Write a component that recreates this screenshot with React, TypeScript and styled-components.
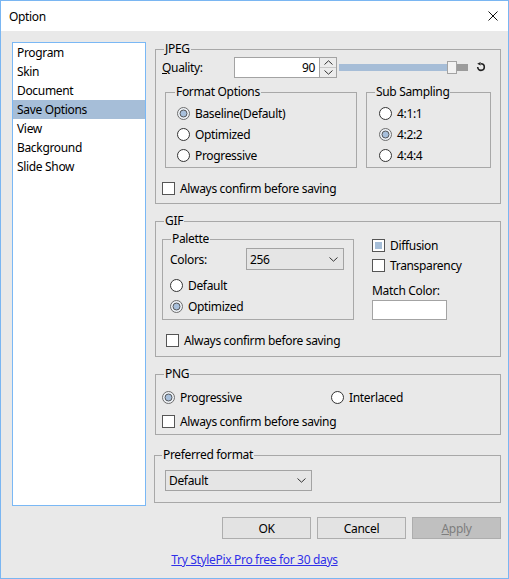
import { createGlobalStyle, styled } from 'styled-components';

const GlobalStyle = createGlobalStyle`
  html, body {
    margin: 0;
    padding: 0;
    background: #ffffff;
  }
  body {
    font-family: 'Segoe UI', 'Noto Sans', sans-serif;
    font-size: 12px;
    letter-spacing: -0.33px;
    color: #000;
  }
  * {
    box-sizing: border-box;
  }
`;

const Window = styled.div`
  width: 509px;
  height: 579px;
  border: 1px solid #7ab6f2;
  background: #e9e9e9;
  display: flex;
  flex-direction: column;
`;

const TitleBar = styled.div`
  height: 30px;
  flex-shrink: 0;
  background: #fff;
  display: flex;
  align-items: center;
  justify-content: space-between;
  padding: 0 10px 0 8px;
`;

const Title = styled.span`
  font-size: 12px;
`;

const Body = styled.div`
  display: flex;
  gap: 9px;
  padding: 11px 0 0 11px;
`;

const NavList = styled.ul`
  list-style: none;
  margin: 0;
  padding: 0;
  width: 134px;
  height: 464px;
  background: #fff;
  border: 1px solid #7ab8f5;
`;

const NavItem = styled.li<{ $active?: boolean }>`
  height: 19px;
  line-height: 19px;
  padding-left: 4px;
  background: ${p => (p.$active ? '#a6bed8' : 'transparent')};
`;

const RightCol = styled.div`
  width: 346px;
  display: flex;
  flex-direction: column;
`;

const Group = styled.fieldset<{ $w?: number; $gap?: number; $shift?: number }>`
  margin: ${p => p.$gap ?? 0}px 0 0 ${p => p.$shift ?? 0}px;
  padding: 0;
  min-width: 0;
  width: ${p => (p.$w ? `${p.$w}px` : 'auto')};
  border: 1px solid #a8a8a8;
`;

const Legend = styled.legend<{ $x: number }>`
  margin-left: ${p => p.$x}px;
  padding: 0 1px;
  height: 14px;
  line-height: 14px;
  font-size: 12px;
`;

const GroupBody = styled.div<{ $pad: string }>`
  display: flex;
  flex-direction: column;
  padding: ${p => p.$pad};
`;

const Row = styled.div<{ $h?: number; $mt?: number; $pl?: number; $gap?: number }>`
  display: flex;
  align-items: center;
  height: ${p => (p.$h ? `${p.$h}px` : 'auto')};
  margin-top: ${p => p.$mt ?? 0}px;
  padding-left: ${p => p.$pl ?? 0}px;
  gap: ${p => p.$gap ?? 0}px;
`;

const TopRow = styled.div<{ $mt?: number; $pl?: number; $gap?: number }>`
  display: flex;
  align-items: flex-start;
  margin-top: ${p => p.$mt ?? 0}px;
  padding-left: ${p => p.$pl ?? 0}px;
  gap: ${p => p.$gap ?? 0}px;
`;

const StretchRow = styled(TopRow)`
  align-items: stretch;
`;

const Label = styled.span<{ $w?: number }>`
  width: ${p => (p.$w ? `${p.$w}px` : 'auto')};
  flex-shrink: 0;
  white-space: nowrap;
`;

const TextBox = styled.div<{ $w: number; $h: number }>`
  width: ${p => p.$w}px;
  height: ${p => p.$h}px;
  background: #fff;
  border: 1px solid #a3a3a3;
  display: flex;
  align-items: center;
  justify-content: flex-end;
  padding-right: 4px;
`;

const Spin = styled.div`
  width: 17px;
  height: 21px;
  border: 1px solid #a3a3a3;
  border-left: none;
  display: flex;
  flex-direction: column;
`;

const SpinHalf = styled.div<{ $top?: boolean }>`
  flex: 1;
  display: flex;
  align-items: center;
  justify-content: center;
  background: #ececec;
  border-bottom: ${p => (p.$top ? '1px solid #c8c8c8' : 'none')};
`;

const Slider = styled.div`
  display: flex;
  align-items: center;
  margin-left: 2px;
`;

const SliderFill = styled.div`
  width: 108px;
  height: 7px;
  background: #a6bdd7;
`;

const SliderThumb = styled.div`
  width: 10px;
  height: 13px;
  background: #f2f2f2;
  border: 1px solid #a3a3a3;
`;

const SliderRest = styled.div`
  width: 11px;
  height: 7px;
  background: #9b9b9b;
`;

const ResetIcon = styled.svg`
  margin-left: 8px;
`;

const Combo = styled.div<{ $w: number; $h: number }>`
  width: ${p => p.$w}px;
  height: ${p => p.$h}px;
  background: #e5e5e5;
  border: 1px solid #a3a3a3;
  display: flex;
  align-items: center;
  justify-content: space-between;
  padding: 0 5px 0 3px;
`;

const Option = styled.label<{ $w?: number; $h?: number }>`
  display: flex;
  align-items: center;
  gap: 5px;
  height: ${p => p.$h ?? 21}px;
  width: ${p => (p.$w ? `${p.$w}px` : 'auto')};
  white-space: nowrap;
`;

const Box = styled.span<{ $checked?: boolean }>`
  width: 13px;
  height: 13px;
  flex-shrink: 0;
  background: #fff;
  border: 1px solid #555;
  padding: 2px;
  display: flex;

  &::after {
    content: '';
    flex: 1;
    background: ${p => (p.$checked ? '#a6bed8' : 'transparent')};
  }
`;

const Column = styled.div<{ $mt?: number }>`
  display: flex;
  flex-direction: column;
  margin-top: ${p => p.$mt ?? 0}px;
`;

const Footer = styled.div`
  display: flex;
  justify-content: flex-end;
  gap: 6px;
  padding-right: 7px;
  margin-top: 11px;
`;

const Button = styled.button<{ $disabled?: boolean }>`
  width: 89px;
  height: 22px;
  font-family: inherit;
  font-size: 12px;
  letter-spacing: inherit;
  color: ${p => (p.$disabled ? '#7d7d7d' : '#000')};
  background: ${p => (p.$disabled ? '#c0c0c0' : '#e3e3e3')};
  border: 1px solid #adadad;
  padding: 0;
`;

const LinkRow = styled.div`
  display: flex;
  justify-content: center;
  margin-top: 13px;
`;

const Link = styled.a`
  color: #3030e8;
  text-decoration: underline;
  line-height: 16px;
`;

function Radio({ checked }: { checked?: boolean }) {
  return (
    <svg width="13" height="13" viewBox="0 0 13 13" style={{ flexShrink: 0 }}>
      <circle cx="6.5" cy="6.5" r="6" fill={checked ? '#eef2f7' : '#fff'} stroke={checked ? '#6d6d6d' : '#333'} />
      {checked && <circle cx="6.5" cy="6.5" r="3.5" fill="#a8c0dc" stroke="#4a4a4a" strokeWidth="0.9" />}
    </svg>
  );
}

function Chevron({ up }: { up?: boolean }) {
  return (
    <svg width="9" height="5" viewBox="0 0 9 5">
      <polyline
        points={up ? '0.5,4.5 4.5,0.8 8.5,4.5' : '0.5,0.5 4.5,4.2 8.5,0.5'}
        fill="none"
        stroke="#333"
        strokeWidth="1"
      />
    </svg>
  );
}

function Check({ label, checked }: { label: string; checked?: boolean }) {
  return (
    <Option $h={20}>
      <Box $checked={checked} />
      {label}
    </Option>
  );
}

export default function App() {
  return (
    <>
      <GlobalStyle />
      <Window>
        <TitleBar>
          <Title>Option</Title>
          <svg width="10" height="10" viewBox="0 0 10 10">
            <path d="M0.5 0.5 L9.5 9.5 M9.5 0.5 L0.5 9.5" stroke="#111" strokeWidth="1" />
          </svg>
        </TitleBar>
        <Body>
          <NavList>
            <NavItem>Program</NavItem>
            <NavItem>Skin</NavItem>
            <NavItem>Document</NavItem>
            <NavItem $active>Save Options</NavItem>
            <NavItem>View</NavItem>
            <NavItem>Background</NavItem>
            <NavItem>Slide Show</NavItem>
          </NavList>
          <RightCol>
            <Group>
              <Legend $x={8}>JPEG</Legend>
              <GroupBody $pad="0 0 5px 0">
                <Row $h={22} $pl={6}>
                  <Label $w={72}>
                    <u>Q</u>uality:
                  </Label>
                  <TextBox $w={86} $h={21}>90</TextBox>
                  <Spin>
                    <SpinHalf $top>
                      <Chevron up />
                    </SpinHalf>
                    <SpinHalf>
                      <Chevron />
                    </SpinHalf>
                  </Spin>
                  <Slider>
                    <SliderFill />
                    <SliderThumb />
                    <SliderRest />
                  </Slider>
                  <ResetIcon width="10" height="10" viewBox="0 0 10 10">
                    <path d="M5 1.8 A3.3 3.3 0 1 1 1.7 5.1" fill="none" stroke="#222" strokeWidth="1.6" />
                    <polygon points="1.2,1.8 4.6,0 4.6,3.6" fill="#222" />
                  </ResetIcon>
                </Row>
                <StretchRow $mt={7} $pl={9} $gap={9}>
                  <Group $w={192}>
                    <Legend $x={9}>Format Options</Legend>
                    <GroupBody $pad="4px 0 1px 11px">
                      <Option>
                        <Radio checked />
                        Baseline(Default)
                      </Option>
                      <Option>
                        <Radio />
                        Optimized
                      </Option>
                      <Option>
                        <Radio />
                        Progressive
                      </Option>
                    </GroupBody>
                  </Group>
                  <Group $w={125}>
                    <Legend $x={8}>Sub Sampling</Legend>
                    <GroupBody $pad="4px 0 1px 12px">
                      <Option>
                        <Radio />
                        4:1:1
                      </Option>
                      <Option>
                        <Radio checked />
                        4:2:2
                      </Option>
                      <Option>
                        <Radio />
                        4:4:4
                      </Option>
                    </GroupBody>
                  </Group>
                </StretchRow>
                <Row $mt={10} $pl={6}>
                  <Check label="Always confirm before saving" />
                </Row>
              </GroupBody>
            </Group>

            <Group $gap={10}>
              <Legend $x={8}>GIF</Legend>
              <GroupBody $pad="0 0 6px 0">
                <TopRow $mt={4} $pl={6} $gap={18}>
                  <Group $w={192}>
                    <Legend $x={8}>Palette</Legend>
                    <GroupBody $pad="2px 0 2px 7px">
                      <Row $h={22}>
                        <Label $w={76}>Colors:</Label>
                        <Combo $w={98} $h={22}>
                          256
                          <Chevron />
                        </Combo>
                      </Row>
                      <Column $mt={5}>
                        <Option>
                          <Radio />
                          Default
                        </Option>
                        <Option>
                          <Radio checked />
                          Optimized
                        </Option>
                      </Column>
                    </GroupBody>
                  </Group>
                  <Column $mt={3}>
                    <Check label="Diffusion" checked />
                    <Check label="Transparency" />
                    <Row $h={20} $mt={5}>
                      Match Color:
                    </Row>
                    <TextBox $w={75} $h={20} />
                  </Column>
                </TopRow>
                <Row $mt={10} $pl={10}>
                  <Check label="Always confirm before saving" />
                </Row>
              </GroupBody>
            </Group>

            <Group $gap={10}>
              <Legend $x={8}>PNG</Legend>
              <GroupBody $pad="0 0 3px 0">
                <Row $mt={6} $pl={6}>
                  <Option $w={169}>
                    <Radio checked />
                    Progressive
                  </Option>
                  <Option>
                    <Radio />
                    Interlaced
                  </Option>
                </Row>
                <Row $mt={3} $pl={6}>
                  <Check label="Always confirm before saving" />
                </Row>
              </GroupBody>
            </Group>

            <Group $gap={13} $shift={-1} $w={347}>
              <Legend $x={7}>Preferred format</Legend>
              <GroupBody $pad="8px 0 11px 10px">
                <Combo $w={147} $h={21}>
                  Default
                  <Chevron />
                </Combo>
              </GroupBody>
            </Group>
          </RightCol>
        </Body>
        <Footer>
          <Button>OK</Button>
          <Button>Cancel</Button>
          <Button $disabled>
            <u>A</u>pply
          </Button>
        </Footer>
        <LinkRow>
          <Link href="#">Try StylePix Pro free for 30 days</Link>
        </LinkRow>
      </Window>
    </>
  );
}
